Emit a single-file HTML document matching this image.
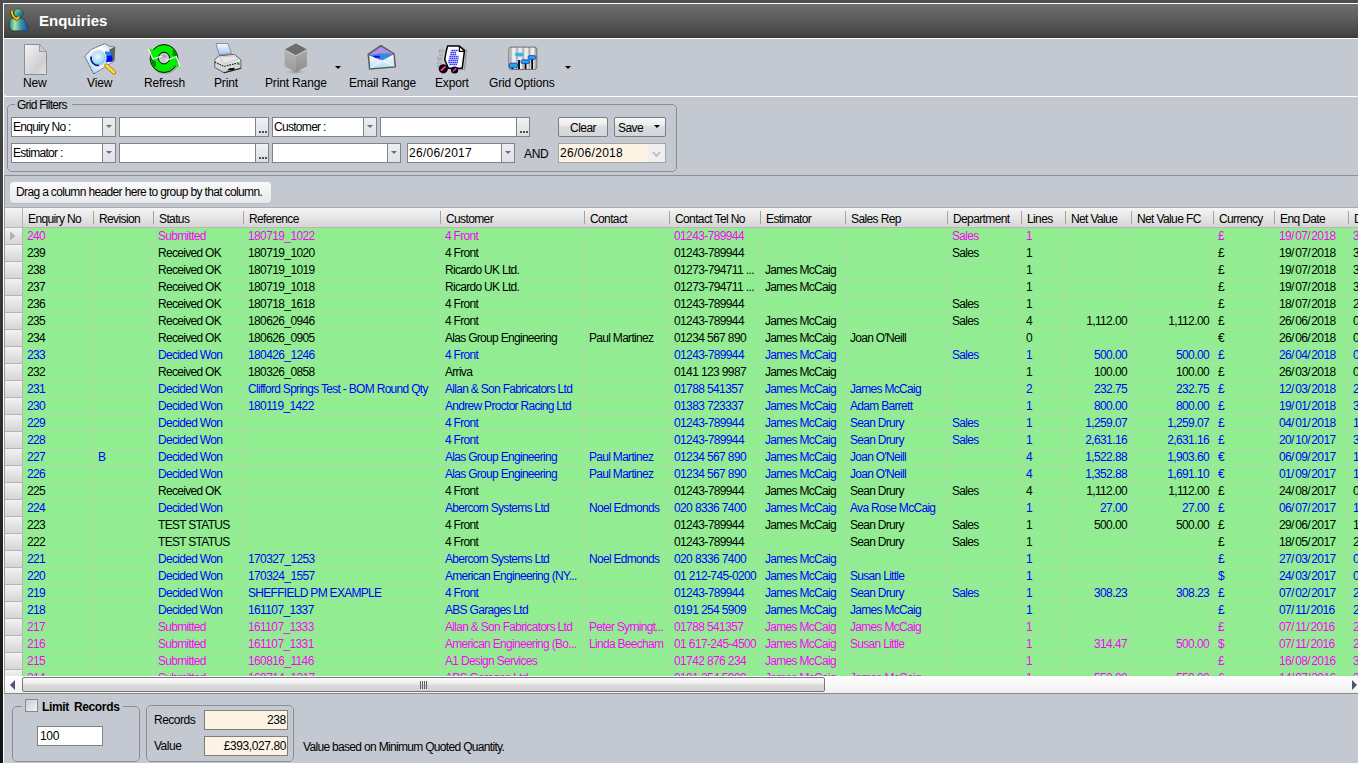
<!DOCTYPE html>
<html><head><meta charset="utf-8">
<style>
*{margin:0;padding:0;box-sizing:border-box}
html,body{width:1358px;height:763px;overflow:hidden}
body{position:relative;background:linear-gradient(#4e4e4e,#131313);font-family:"Liberation Sans",sans-serif;font-size:11px;color:#000}
.a{position:absolute}
#frame{left:3px;top:3px;width:1355px;height:760px;background:#fff}
#title{left:4px;top:4px;width:1354px;height:34px;background:linear-gradient(#6d6f6d,#5a5b5a 45%,#454545 90%,#383838)}
#title .t{left:35px;top:8px;font-size:15px;font-weight:bold;color:#fff;letter-spacing:0}
#toolbar{left:4px;top:39px;width:1354px;height:57px;background:#c4c8d0;border-bottom-left-radius:3px}
#panel{left:4px;top:97px;width:1354px;height:666px;background:#c4c8d0}
.tb{position:absolute;font-size:12px;color:#000;white-space:nowrap;letter-spacing:-0.15px}
.ddarrow{position:absolute;width:0;height:0;border-left:3px solid transparent;border-right:3px solid transparent;border-top:3px solid #000}
.gbox{position:absolute;border:1px solid #8a8d93;border-radius:4px}
.legend{position:absolute;background:#c4c8d0;padding:0 2px;white-space:nowrap;font-size:12px}
.inp{position:absolute;background:#fff;border:1px solid #828282;height:20px;white-space:nowrap;overflow:hidden}
.inp .tx{position:absolute;left:1px;top:2px;font-size:12px;letter-spacing:-0.7px}
.dd{position:absolute;top:0;right:0;width:13px;height:18px;border-left:1px solid #828282;background:linear-gradient(#eceef3,#dfe2e8)}
.dd:after{content:"";position:absolute;left:3px;top:7px;border-left:3px solid transparent;border-right:3px solid transparent;border-top:3px solid #707070}
.ell{position:absolute;background:linear-gradient(#f1f2f5,#dcdee3);border:1px solid #828282;height:20px;width:14px}
.ell:after{content:"";position:absolute;left:3px;top:13px;width:2px;height:2px;background:#505050;box-shadow:3px 0 0 #505050,6px 0 0 #505050}
.btn{position:absolute;border:1px solid #7b7d80;border-radius:2px;background:linear-gradient(#f7f7f8,#ececee 40%,#dcdee2 45%,#d3d5d9);height:20px;text-align:center;font-size:12px;line-height:21px;letter-spacing:-0.55px}
#grid{left:4px;top:175px;width:1354px;height:519px;background:#c4c8d0;border-top:1px solid #8e8e8e;border-left:1px solid #999;border-bottom:1px solid #888}
#dragbox{left:10px;top:182px;width:261px;height:21px;border-radius:4px;background:linear-gradient(#fafafa,#e8e9eb);box-shadow:0 1px 1px #b9bcc2;font-size:12px;line-height:21px;padding-left:6px;letter-spacing:-0.64px}
#hdr{left:5px;top:207px;width:1353px;height:21px;background:linear-gradient(#f4f4f4,#e6e6e6 50%,#d5d5d5);border-top:1px solid #a9abb0;border-bottom:1px solid #b9b5b9}
.hc{position:absolute;top:211px;height:17px;line-height:17px;padding-left:5px;white-space:nowrap;overflow:hidden;font-size:12px;letter-spacing:-0.62px}
.hsep{position:absolute;top:211px;width:1px;height:13px;background:#a2a2a2}
#data{left:23px;top:228px;width:1335px;height:448px;background:#90ee90;overflow:hidden}
.row{position:absolute;left:0;width:1358px;height:16px}
.c{position:absolute;top:0;height:16px;line-height:16px;padding-left:4px;padding-right:0;white-space:nowrap;overflow:hidden;font-size:12px;letter-spacing:-0.7px}
.c.r{text-align:right;padding-right:4px}
.d{letter-spacing:-0.62px}
.sl{letter-spacing:0.7px}
.hl{position:absolute;left:23px;width:1335px;height:1px;background:repeating-linear-gradient(90deg,#c6cfc6 0 1px,transparent 1px 2px)}
.vl{position:absolute;top:228px;width:1px;height:448px;background:repeating-linear-gradient(180deg,#c6cfc6 0 1px,transparent 1px 2px)}
#selcol{left:5px;top:228px;width:18px;height:448px;background:#d8d8d8;border-right:1px solid #b8b4b8}
.sel{position:absolute;left:5px;width:17px;height:17px;background:linear-gradient(#f2f2f2,#d6d6d6);border-bottom:1px solid #b4b4b4}
#hscroll{left:5px;top:676px;width:1353px;height:17px;background:linear-gradient(#ffffff,#f1f1f1)}
#thumb{left:22px;top:677px;width:803px;height:15px;border:1px solid #787878;border-radius:2px;background:linear-gradient(#fdfdfd,#ececec 45%,#d9d9d9 55%,#d2d2d2)}
.grip{position:absolute;top:681px;width:1px;height:8px;background:#5e5e5e}
.cb{position:absolute;border:1px solid #8a8a8a;background:linear-gradient(135deg,#c9cbd0,#f4f4f6)}
.num{position:absolute;background:#fdf4e6;border:1px solid #7e7e7e;height:20px;text-align:right;padding-right:1px;line-height:18px;font-size:12px;letter-spacing:-0.3px}
</style></head><body>
<div class="a" id="frame"></div>
<div class="a" id="title">
 <div class="a t">Enquiries</div>
</div>
<svg class="a" style="left:8px;top:8px" width="22" height="24" viewBox="0 0 22 24">
  <defs>
   <linearGradient id="hg" x1="0" y1="0" x2="1" y2="1"><stop offset="0" stop-color="#b8e8a8"/><stop offset="0.45" stop-color="#3aa08a"/><stop offset="1" stop-color="#1a3fb0"/></linearGradient>
   <linearGradient id="bg1" x1="0" y1="0" x2="1" y2="0"><stop offset="0" stop-color="#2a8070"/><stop offset="0.3" stop-color="#a8e8b0"/><stop offset="0.6" stop-color="#3a9a9a"/><stop offset="1" stop-color="#1a44c8"/></linearGradient>
  </defs>
  <path d="M1.2 15 C0.8 19 2.5 22.5 5.5 22.8 L18 22.8 C19.5 22.5 20.5 21 20.2 19 L16 11.5 C13 9.5 6 9 3 11 C1.8 12 1.3 13.5 1.2 15 Z" fill="url(#bg1)" stroke="#1a3a3a" stroke-width="0.6"/>
  <ellipse cx="10.6" cy="5.4" rx="4.6" ry="4.7" fill="url(#hg)" stroke="#0f3a30" stroke-width="0.6"/>
  <path d="M3.8 2.6 C3.6 6 5.5 9.8 8.8 11 L11.2 8.8" stroke="#3a2a00" stroke-width="3.2" fill="none" stroke-linejoin="round"/>
  <path d="M3.8 2.6 C3.6 6 5.5 9.8 8.8 11 L11.2 8.8" stroke="#ffc800" stroke-width="2" fill="none" stroke-linejoin="round"/>
</svg>
<div class="a" id="toolbar"></div>
<div class="a" id="panel"></div>

<!-- toolbar icons -->
<svg class="a" style="left:24px;top:44px" width="24" height="31" viewBox="0 0 24 31">
 <defs><linearGradient id="pg" x1="0" y1="0" x2="1" y2="1"><stop offset="0" stop-color="#f4f4f4"/><stop offset="0.5" stop-color="#d9d9dc"/><stop offset="0.7" stop-color="#cfcfd3"/><stop offset="1" stop-color="#e6e6e8"/></linearGradient></defs>
 <path d="M0.5 0.5 H15.5 L22.5 7.5 V30.5 H0.5 Z" fill="url(#pg)" stroke="#8e8e92"/>
 <path d="M15.5 0.5 V7.5 H22.5 Z" fill="#c9cbd6" stroke="#9a9aa0"/>
</svg>
<svg class="a" style="left:84px;top:43px" width="34" height="33" viewBox="0 0 34 33">
 <defs>
  <radialGradient id="lens" cx="0.45" cy="0.4" r="0.65"><stop offset="0" stop-color="#eaf7ff"/><stop offset="0.6" stop-color="#a8dcfa"/><stop offset="1" stop-color="#56b4f0"/></radialGradient>
  <linearGradient id="fold" x1="0" y1="1" x2="1" y2="0"><stop offset="0" stop-color="#6cc0f4"/><stop offset="0.35" stop-color="#e4f2fc"/><stop offset="0.7" stop-color="#ffffff"/><stop offset="1" stop-color="#9ccff6"/></linearGradient>
 </defs>
 <path d="M0.7 13.5 L6.8 6.7 L21 0.5 L24.8 3.1 L30.9 4.1 L30 18.2 L9.7 31 Z" fill="url(#fold)" stroke="#505050" stroke-width="0.9" stroke-dasharray="1.2 0.4"/>
 <path d="M25.2 6.4 L30.9 4.1 L30.4 17.8 L26.7 15.9 Z" fill="#5e6064"/>
 <path d="M21 8.3 L26.5 9 L28.5 18.7 L21 19.5 Z" fill="#1a80f8"/>
 <path d="M22 13 L28 12.5 L28.8 18.5 L21.5 19 Z" fill="#0008f0"/>
 <path d="M22.4 22.5 L30 29.5" stroke="#b07800" stroke-width="4.2" stroke-linecap="round"/>
 <path d="M22.4 22.5 L30 29.5" stroke="#ffe048" stroke-width="2.4" stroke-linecap="round"/>
 <circle cx="14.5" cy="15.1" r="7.6" fill="url(#lens)" stroke="#dcdce6" stroke-width="1.3"/>
 <path d="M7.2 13.5 A7.3 7.3 0 0 0 15 22.4" stroke="#0a1490" stroke-width="1.6" fill="none"/>
</svg>
<svg class="a" style="left:147px;top:43px" width="35" height="32" viewBox="0 0 35 32">
 <ellipse cx="18" cy="17.5" rx="14" ry="13.5" fill="#8f9196" opacity="0.7"/>
 <path d="M17 1.5 A13.8 14 0 1 1 3.2 16 A13.8 14 0 0 1 17 1.5 Z M17 9.3 A5.6 5.8 0 1 0 22.6 15.1 A5.6 5.8 0 0 0 17 9.3 Z" fill="#00ee00" fill-rule="evenodd" stroke="#000" stroke-width="0.9"/>
 <ellipse cx="17" cy="15.3" rx="4.8" ry="5" fill="#c8ccd4"/>
 <path d="M14 13 Q17 10.5 20 13.5 L18 15 Q16 13.5 14.5 15.5 Z" fill="#a0a4aa"/>
 <path d="M3.5 14 L9 19.5 L9 24 L5.5 22.5 Z" fill="#008a00"/>
 <path d="M26 6 L30 10 L29.5 15 L25.5 12 Z" fill="#008a00"/>
 <path d="M1 5 L10 8 L6 13 Z" fill="#00ee00"/>
 <path d="M34 25 L25 21.5 L29.5 17 Z" fill="#00ee00"/>
 <path d="M1.3 5.5 L6 16 L12 14 L15.5 13" stroke="#fff" stroke-width="1.2" fill="none"/>
 <path d="M19 17.5 L29.5 13.5 L33 24" stroke="#fff" stroke-width="1.2" fill="none"/>
</svg>
<svg class="a" style="left:214px;top:43px" width="28" height="31" viewBox="0 0 28 31">
 <defs><linearGradient id="paper" x1="0" y1="0" x2="0" y2="1"><stop offset="0" stop-color="#f6f9ff"/><stop offset="1" stop-color="#a6c4f6"/></linearGradient>
 <linearGradient id="pbody" x1="0" y1="0" x2="0" y2="1"><stop offset="0" stop-color="#f4f4f4"/><stop offset="1" stop-color="#c8c8c8"/></linearGradient></defs>
 <path d="M2 0.5 L13.8 0.5 L17.6 10.5 L5.3 12 Z" fill="url(#paper)" stroke="#7a7a80" stroke-width="0.8"/>
 <path d="M0.8 16.5 L5 12.8 L20.5 11.5 L26.8 16.8 L27 25.3 L10 29.8 L0.8 24.5 Z" fill="url(#pbody)" stroke="#555" stroke-width="0.9"/>
 <path d="M5 14 L20 12.8 L24 16 L10 20.5 Z" fill="#e8e8e8" stroke="#b8b8b8" stroke-width="0.6"/>
 <path d="M0.8 19.2 L10 23.4 L25.5 19.6" stroke="#111" stroke-width="1.1" stroke-dasharray="1.6 1" fill="none"/>
 <rect x="23.5" y="19.8" width="2.2" height="2.2" fill="#20c020"/>
 <path d="M13.5 27.5 L15 25.5 L21 24.8 L19.5 27 Z" fill="#000"/>
 <path d="M10 29.8 L27 25.3" stroke="#222" stroke-width="1"/>
</svg>
<svg class="a" style="left:283px;top:42px" width="27" height="33" viewBox="0 0 27 33">
 <defs><linearGradient id="cubeL" x1="0" y1="0" x2="0" y2="1"><stop offset="0" stop-color="#b4b4b4"/><stop offset="1" stop-color="#9a9a9a"/></linearGradient>
 <linearGradient id="cubeR" x1="0" y1="0" x2="0" y2="1"><stop offset="0" stop-color="#aaaaaa"/><stop offset="1" stop-color="#8e8e8e"/></linearGradient>
 <radialGradient id="shd" cx="0.5" cy="0.5" r="0.5"><stop offset="0" stop-color="#80838a"/><stop offset="1" stop-color="#c4c8d0" stop-opacity="0"/></radialGradient></defs>
 <ellipse cx="12.8" cy="29.8" rx="12" ry="3.2" fill="url(#shd)"/>
 <path d="M1.6 7.8 L12.8 13.8 L12.8 30 L1.8 24.2 Z" fill="url(#cubeL)"/>
 <path d="M12.8 13.8 L24 7.8 L23.8 24.2 L12.8 30 Z" fill="url(#cubeR)"/>
 <path d="M1.3 7.3 L12.8 1 L24.4 7.3 L12.8 13.8 Z" fill="#6e6e6e"/>
 <path d="M1.3 7.3 L12.8 1 L24.4 7.3" stroke="#f0f0f0" stroke-width="0.9" stroke-dasharray="1 1" fill="none"/>
 <path d="M1.6 7.8 L12.8 13.8 L24 7.8" stroke="#dcdcdc" stroke-width="0.8" fill="none"/>
</svg>
<div class="ddarrow" style="left:335px;top:66px"></div>
<svg class="a" style="left:367px;top:45px" width="30" height="26" viewBox="0 0 30 26">
 <defs><linearGradient id="env" x1="0" y1="0" x2="0" y2="1"><stop offset="0" stop-color="#ffffff"/><stop offset="1" stop-color="#b4ddfa"/></linearGradient></defs>
 <path d="M1.1 9.2 L13.9 0.4 L27.1 8.7 L28.5 21.9 L2.5 24.2 Z" fill="#6a6a6a" stroke="#5a5a5a" stroke-width="1.2" stroke-linejoin="round"/>
 <path d="M2.5 9.5 L13.9 1.8 L26 8.7 L15.3 15 Z" fill="#b48cf0"/>
 <rect x="10.6" y="8.2" width="13" height="1.9" fill="#6e9090"/>
 <path d="M2.1 9.6 L25.5 8.7 L15.3 14.8 Z" fill="#1a92f0"/>
 <rect x="6.5" y="10.8" width="6.5" height="2.8" fill="#0a10d0"/>
 <rect x="10" y="12.3" width="3" height="2" fill="#c020c8"/>
 <path d="M2.3 10.6 L15.3 15.5 L26.4 9.6 L27.4 21.2 L3.3 23.3 Z" fill="url(#env)"/>
 <path d="M3.3 23 L15.5 15.5 L27.3 21" stroke="#ffffff" stroke-width="0.8" fill="none"/>
</svg>
<svg class="a" style="left:437px;top:45px" width="31" height="30" viewBox="0 0 31 30">
 <path d="M2 5 H7 M1 7 H7 M2 10 H6 M0 13 H6 M1 15 H5 M0 18 H5 M0 21 H4" stroke="#8e9096" stroke-width="1" stroke-dasharray="2 0.7"/>
 <path d="M12 3 L26 3 L29.5 6 L27.5 24.5 L13 24.5" fill="none" stroke="#9a9ca2" stroke-width="1.4"/>
 <path d="M10.6 1.1 L22.4 1.1 L27.5 5.6 L25.2 23.3 L11.5 23.3 L7.7 14.8 L9.2 6.3 Z" fill="#fff" stroke="#000" stroke-width="1.5" stroke-linejoin="round"/>
 <path d="M22.4 1.1 L22.4 6.3 L27.5 6.3" fill="none" stroke="#000" stroke-width="1.3"/>
 <g stroke="#0000ff" stroke-width="1.5" stroke-dasharray="1.3 0.7">
  <path d="M14.5 5.4 H21"/><path d="M13.5 7.5 H19.5"/><path d="M13.5 9.4 H19"/><path d="M12.5 11.5 H21.5"/><path d="M12.5 13.4 H21.5"/><path d="M11.5 15.5 H21"/><path d="M11.5 17.4 H21"/><path d="M12.5 19.5 H20.5"/>
 </g>
 <circle cx="6.3" cy="23.8" r="4.6" fill="#000"/><path d="M3.8 25.6 L8.6 21.4" stroke="#ff20d0" stroke-width="2"/><path d="M4.5 26 L7 24" stroke="#ff1010" stroke-width="1"/>
 <circle cx="17.6" cy="25" r="3.6" fill="#000"/><path d="M15.9 26.4 L19.3 23.4" stroke="#ff20d0" stroke-width="1.7"/>
</svg>
<svg class="a" style="left:508px;top:46px" width="30" height="25" viewBox="0 0 30 25">
 <defs><linearGradient id="gog" x1="0" y1="0" x2="1" y2="0" spreadMethod="repeat" gradientTransform="scale(0.22,1)"><stop offset="0" stop-color="#f0f0f0"/><stop offset="0.35" stop-color="#a8a8a8"/><stop offset="0.6" stop-color="#e8e8e8"/><stop offset="1" stop-color="#f0f0f0"/></linearGradient></defs>
 <rect x="0.8" y="1.1" width="28" height="22.4" rx="2.5" fill="url(#gog)" stroke="#6e6e6e" stroke-width="1"/>
 <path d="M4.4 18 V23 M11 14 V23 M17.6 14 V23 M24.2 10 V23" stroke="#000" stroke-width="1.8"/>
 <rect x="1.2" y="17.1" width="8.4" height="4.7" rx="2" fill="#1aa8e8" stroke="#0a20c0" stroke-width="0.7"/>
 <rect x="6.8" y="6.7" width="8.5" height="3.8" rx="1.9" fill="#29b8ee"/>
 <rect x="12.9" y="13.8" width="9" height="3.8" rx="1.9" fill="#1aa8e8" stroke="#0a20c0" stroke-width="0.7"/>
 <rect x="20" y="9.6" width="8" height="3.7" rx="1.8" fill="#1aa8e8" stroke="#0a20c0" stroke-width="0.7"/>
</svg>
<div class="ddarrow" style="left:565px;top:66px"></div>

<div class="tb" style="left:23px;top:76px">New</div>
<div class="tb" style="left:87px;top:76px">View</div>
<div class="tb" style="left:144px;top:76px">Refresh</div>
<div class="tb" style="left:214px;top:76px">Print</div>
<div class="tb" style="left:265px;top:76px">Print Range</div>
<div class="tb" style="left:349px;top:76px">Email Range</div>
<div class="tb" style="left:435px;top:76px">Export</div>
<div class="tb" style="left:489px;top:76px">Grid Options</div>

<!-- Grid filters -->
<svg class="a" style="left:7px;top:104px" width="670" height="68"><path d="M3.5 0.5 H666.5 L669.5 3.5 V64.5 L666.5 67.5 H3.5 L0.5 64.5 V3.5 Z" fill="none" stroke="#8a8d93" stroke-width="1"/></svg>
<div class="legend" style="left:15px;top:98px;width:57px;letter-spacing:-0.75px">Grid Filters</div>

<div class="inp" style="left:11px;top:117px;width:105px"><span class="tx">Enquiry No :</span><div class="dd"></div></div>
<div class="inp" style="left:119px;top:117px;width:137px"></div>
<div class="ell" style="left:255px;top:117px"></div>
<div class="inp" style="left:272px;top:117px;width:105px"><span class="tx">Customer :</span><div class="dd"></div></div>
<div class="inp" style="left:380px;top:117px;width:137px"></div>
<div class="ell" style="left:516px;top:117px"></div>
<div class="btn" style="left:558px;top:117px;width:50px">Clear</div>
<div class="btn" style="left:614px;top:117px;width:52px;text-align:left;padding-left:3px">Save<div class="ddarrow" style="left:39px;top:7px"></div></div>

<div class="inp" style="left:11px;top:143px;width:105px"><span class="tx">Estimator :</span><div class="dd"></div></div>
<div class="inp" style="left:119px;top:143px;width:137px"></div>
<div class="ell" style="left:255px;top:143px"></div>
<div class="inp" style="left:272px;top:143px;width:129px"><div class="dd"></div></div>
<div class="inp" style="left:407px;top:143px;width:108px"><span class="tx" style="letter-spacing:0.3px">26/06/2017</span><div class="dd"></div></div>
<div class="a" style="left:524px;top:147px;font-size:12px;letter-spacing:-0.3px">AND</div>
<div class="inp" style="left:558px;top:143px;width:108px;background:#fdf4e6;border-color:#a4a4a4"><span class="tx" style="letter-spacing:0.3px">26/06/2018</span><div class="a" style="right:0;top:0;width:17px;height:18px;background:#efefef"><svg class="a" style="left:4px;top:7px" width="9" height="7"><path d="M0.8 0.8 L4.5 5 L8.2 0.8" stroke="#bdbdbd" stroke-width="1.8" fill="none"/></svg></div></div>

<!-- grid -->
<div class="a" id="grid"></div>
<div class="a" id="dragbox">Drag a column header here to group by that column.</div>
<div class="a" id="hdr"></div>
<div class="hc" style="left:23px;width:70px">Enquiry No</div><div class="hsep" style="left:93px"></div><div class="hc" style="left:94px;width:59px">Revision</div><div class="hsep" style="left:153px"></div><div class="hc" style="left:154px;width:89px">Status</div><div class="hsep" style="left:243px"></div><div class="hc" style="left:244px;width:196px">Reference</div><div class="hsep" style="left:440px"></div><div class="hc" style="left:441px;width:143px">Customer</div><div class="hsep" style="left:584px"></div><div class="hc" style="left:585px;width:84px">Contact</div><div class="hsep" style="left:669px"></div><div class="hc" style="left:670px;width:90px">Contact Tel No</div><div class="hsep" style="left:760px"></div><div class="hc" style="left:761px;width:84px">Estimator</div><div class="hsep" style="left:845px"></div><div class="hc" style="left:846px;width:101px">Sales Rep</div><div class="hsep" style="left:947px"></div><div class="hc" style="left:948px;width:73px">Department</div><div class="hsep" style="left:1021px"></div><div class="hc" style="left:1022px;width:43px">Lines</div><div class="hsep" style="left:1065px"></div><div class="hc" style="left:1066px;width:65px">Net Value</div><div class="hsep" style="left:1131px"></div><div class="hc" style="left:1132px;width:81px">Net Value FC</div><div class="hsep" style="left:1213px"></div><div class="hc" style="left:1214px;width:60px">Currency</div><div class="hsep" style="left:1274px"></div><div class="hc" style="left:1275px;width:73px">Enq Date</div><div class="hsep" style="left:1348px"></div><div class="hc" style="left:1349px;width:71px">Date</div>
<div class="a" id="selcol"></div>
<div class="sel" style="top:228px"></div><div class="sel" style="top:245px"></div><div class="sel" style="top:262px"></div><div class="sel" style="top:279px"></div><div class="sel" style="top:296px"></div><div class="sel" style="top:313px"></div><div class="sel" style="top:330px"></div><div class="sel" style="top:347px"></div><div class="sel" style="top:364px"></div><div class="sel" style="top:381px"></div><div class="sel" style="top:398px"></div><div class="sel" style="top:415px"></div><div class="sel" style="top:432px"></div><div class="sel" style="top:449px"></div><div class="sel" style="top:466px"></div><div class="sel" style="top:483px"></div><div class="sel" style="top:500px"></div><div class="sel" style="top:517px"></div><div class="sel" style="top:534px"></div><div class="sel" style="top:551px"></div><div class="sel" style="top:568px"></div><div class="sel" style="top:585px"></div><div class="sel" style="top:602px"></div><div class="sel" style="top:619px"></div><div class="sel" style="top:636px"></div><div class="sel" style="top:653px"></div><div class="sel" style="top:670px"></div>
<div class="a" style="left:22px;top:208px;width:1px;height:19px;background:#b4b4b4"></div>
<svg class="a" style="left:10px;top:231px" width="7" height="11"><path d="M0 0.5 L5.5 5 L0 9.5 Z" fill="#b0b0b0"/></svg>
<div class="a" id="data"></div>
<div class="hl" style="top:244px"></div><div class="hl" style="top:261px"></div><div class="hl" style="top:278px"></div><div class="hl" style="top:295px"></div><div class="hl" style="top:312px"></div><div class="hl" style="top:329px"></div><div class="hl" style="top:346px"></div><div class="hl" style="top:363px"></div><div class="hl" style="top:380px"></div><div class="hl" style="top:397px"></div><div class="hl" style="top:414px"></div><div class="hl" style="top:431px"></div><div class="hl" style="top:448px"></div><div class="hl" style="top:465px"></div><div class="hl" style="top:482px"></div><div class="hl" style="top:499px"></div><div class="hl" style="top:516px"></div><div class="hl" style="top:533px"></div><div class="hl" style="top:550px"></div><div class="hl" style="top:567px"></div><div class="hl" style="top:584px"></div><div class="hl" style="top:601px"></div><div class="hl" style="top:618px"></div><div class="hl" style="top:635px"></div><div class="hl" style="top:652px"></div><div class="hl" style="top:669px"></div><div class="vl" style="left:93px"></div><div class="vl" style="left:153px"></div><div class="vl" style="left:243px"></div><div class="vl" style="left:440px"></div><div class="vl" style="left:584px"></div><div class="vl" style="left:669px"></div><div class="vl" style="left:760px"></div><div class="vl" style="left:845px"></div><div class="vl" style="left:947px"></div><div class="vl" style="left:1021px"></div><div class="vl" style="left:1065px"></div><div class="vl" style="left:1131px"></div><div class="vl" style="left:1213px"></div><div class="vl" style="left:1274px"></div><div class="vl" style="left:1348px"></div>
<div class="a" style="left:0;top:0;width:1358px;height:763px;overflow:hidden;pointer-events:none">
 <div class="a" style="left:0;top:0;width:1358px;height:676px;overflow:hidden"><div class="row" style="top:228px;color:#ff00ff"><div class="c d" style="left:23px;width:70px">240</div><div class="c" style="left:154px;width:89px">Submitted</div><div class="c d" style="left:244px;width:196px">180719_1022</div><div class="c" style="left:441px;width:143px">4 Front</div><div class="c d" style="left:670px;width:90px">01243-789944</div><div class="c" style="left:948px;width:73px">Sales</div><div class="c d" style="left:1022px;width:43px">1</div><div class="c" style="left:1214px;width:60px">£</div><div class="c d" style="left:1275px;width:73px">19<span class="sl">/</span>07<span class="sl">/</span>2018</div><div class="c d" style="left:1349px;width:71px">3</div></div><div class="row" style="top:245px;color:#000000"><div class="c d" style="left:23px;width:70px">239</div><div class="c" style="left:154px;width:89px">Received OK</div><div class="c d" style="left:244px;width:196px">180719_1020</div><div class="c" style="left:441px;width:143px">4 Front</div><div class="c d" style="left:670px;width:90px">01243-789944</div><div class="c" style="left:948px;width:73px">Sales</div><div class="c d" style="left:1022px;width:43px">1</div><div class="c" style="left:1214px;width:60px">£</div><div class="c d" style="left:1275px;width:73px">19<span class="sl">/</span>07<span class="sl">/</span>2018</div><div class="c d" style="left:1349px;width:71px">3</div></div><div class="row" style="top:262px;color:#000000"><div class="c d" style="left:23px;width:70px">238</div><div class="c" style="left:154px;width:89px">Received OK</div><div class="c d" style="left:244px;width:196px">180719_1019</div><div class="c" style="left:441px;width:143px">Ricardo UK Ltd.</div><div class="c d" style="left:670px;width:90px">01273-794711 ...</div><div class="c" style="left:761px;width:84px">James McCaig</div><div class="c d" style="left:1022px;width:43px">1</div><div class="c" style="left:1214px;width:60px">£</div><div class="c d" style="left:1275px;width:73px">19<span class="sl">/</span>07<span class="sl">/</span>2018</div><div class="c d" style="left:1349px;width:71px">3</div></div><div class="row" style="top:279px;color:#000000"><div class="c d" style="left:23px;width:70px">237</div><div class="c" style="left:154px;width:89px">Received OK</div><div class="c d" style="left:244px;width:196px">180719_1018</div><div class="c" style="left:441px;width:143px">Ricardo UK Ltd.</div><div class="c d" style="left:670px;width:90px">01273-794711 ...</div><div class="c" style="left:761px;width:84px">James McCaig</div><div class="c d" style="left:1022px;width:43px">1</div><div class="c" style="left:1214px;width:60px">£</div><div class="c d" style="left:1275px;width:73px">19<span class="sl">/</span>07<span class="sl">/</span>2018</div><div class="c d" style="left:1349px;width:71px">3</div></div><div class="row" style="top:296px;color:#000000"><div class="c d" style="left:23px;width:70px">236</div><div class="c" style="left:154px;width:89px">Received OK</div><div class="c d" style="left:244px;width:196px">180718_1618</div><div class="c" style="left:441px;width:143px">4 Front</div><div class="c d" style="left:670px;width:90px">01243-789944</div><div class="c" style="left:948px;width:73px">Sales</div><div class="c d" style="left:1022px;width:43px">1</div><div class="c" style="left:1214px;width:60px">£</div><div class="c d" style="left:1275px;width:73px">18<span class="sl">/</span>07<span class="sl">/</span>2018</div><div class="c d" style="left:1349px;width:71px">2</div></div><div class="row" style="top:313px;color:#000000"><div class="c d" style="left:23px;width:70px">235</div><div class="c" style="left:154px;width:89px">Received OK</div><div class="c d" style="left:244px;width:196px">180626_0946</div><div class="c" style="left:441px;width:143px">4 Front</div><div class="c d" style="left:670px;width:90px">01243-789944</div><div class="c" style="left:761px;width:84px">James McCaig</div><div class="c" style="left:948px;width:73px">Sales</div><div class="c d" style="left:1022px;width:43px">4</div><div class="c r d" style="left:1066px;width:65px">1,112.00</div><div class="c r d" style="left:1132px;width:81px">1,112.00</div><div class="c" style="left:1214px;width:60px">£</div><div class="c d" style="left:1275px;width:73px">26<span class="sl">/</span>06<span class="sl">/</span>2018</div><div class="c d" style="left:1349px;width:71px">0</div></div><div class="row" style="top:330px;color:#000000"><div class="c d" style="left:23px;width:70px">234</div><div class="c" style="left:154px;width:89px">Received OK</div><div class="c d" style="left:244px;width:196px">180626_0905</div><div class="c" style="left:441px;width:143px">Alas Group Engineering</div><div class="c" style="left:585px;width:84px">Paul Martinez</div><div class="c d" style="left:670px;width:90px">01234 567 890</div><div class="c" style="left:761px;width:84px">James McCaig</div><div class="c" style="left:846px;width:101px">Joan O'Neill</div><div class="c d" style="left:1022px;width:43px">0</div><div class="c" style="left:1214px;width:60px">€</div><div class="c d" style="left:1275px;width:73px">26<span class="sl">/</span>06<span class="sl">/</span>2018</div><div class="c d" style="left:1349px;width:71px">0</div></div><div class="row" style="top:347px;color:#0000ff"><div class="c d" style="left:23px;width:70px">233</div><div class="c" style="left:154px;width:89px">Decided Won</div><div class="c d" style="left:244px;width:196px">180426_1246</div><div class="c" style="left:441px;width:143px">4 Front</div><div class="c d" style="left:670px;width:90px">01243-789944</div><div class="c" style="left:761px;width:84px">James McCaig</div><div class="c" style="left:948px;width:73px">Sales</div><div class="c d" style="left:1022px;width:43px">1</div><div class="c r d" style="left:1066px;width:65px">500.00</div><div class="c r d" style="left:1132px;width:81px">500.00</div><div class="c" style="left:1214px;width:60px">£</div><div class="c d" style="left:1275px;width:73px">26<span class="sl">/</span>04<span class="sl">/</span>2018</div><div class="c d" style="left:1349px;width:71px">0</div></div><div class="row" style="top:364px;color:#000000"><div class="c d" style="left:23px;width:70px">232</div><div class="c" style="left:154px;width:89px">Received OK</div><div class="c d" style="left:244px;width:196px">180326_0858</div><div class="c" style="left:441px;width:143px">Arriva</div><div class="c d" style="left:670px;width:90px">0141 123 9987</div><div class="c" style="left:761px;width:84px">James McCaig</div><div class="c d" style="left:1022px;width:43px">1</div><div class="c r d" style="left:1066px;width:65px">100.00</div><div class="c r d" style="left:1132px;width:81px">100.00</div><div class="c" style="left:1214px;width:60px">£</div><div class="c d" style="left:1275px;width:73px">26<span class="sl">/</span>03<span class="sl">/</span>2018</div><div class="c d" style="left:1349px;width:71px">0</div></div><div class="row" style="top:381px;color:#0000ff"><div class="c d" style="left:23px;width:70px">231</div><div class="c" style="left:154px;width:89px">Decided Won</div><div class="c" style="left:244px;width:196px">Clifford Springs Test - BOM Round Qty</div><div class="c" style="left:441px;width:143px">Allan &amp; Son Fabricators Ltd</div><div class="c d" style="left:670px;width:90px">01788 541357</div><div class="c" style="left:761px;width:84px">James McCaig</div><div class="c" style="left:846px;width:101px">James McCaig</div><div class="c d" style="left:1022px;width:43px">2</div><div class="c r d" style="left:1066px;width:65px">232.75</div><div class="c r d" style="left:1132px;width:81px">232.75</div><div class="c" style="left:1214px;width:60px">£</div><div class="c d" style="left:1275px;width:73px">12<span class="sl">/</span>03<span class="sl">/</span>2018</div><div class="c d" style="left:1349px;width:71px">2</div></div><div class="row" style="top:398px;color:#0000ff"><div class="c d" style="left:23px;width:70px">230</div><div class="c" style="left:154px;width:89px">Decided Won</div><div class="c d" style="left:244px;width:196px">180119_1422</div><div class="c" style="left:441px;width:143px">Andrew Proctor Racing Ltd</div><div class="c d" style="left:670px;width:90px">01383 723337</div><div class="c" style="left:761px;width:84px">James McCaig</div><div class="c" style="left:846px;width:101px">Adam Barrett</div><div class="c d" style="left:1022px;width:43px">1</div><div class="c r d" style="left:1066px;width:65px">800.00</div><div class="c r d" style="left:1132px;width:81px">800.00</div><div class="c" style="left:1214px;width:60px">£</div><div class="c d" style="left:1275px;width:73px">19<span class="sl">/</span>01<span class="sl">/</span>2018</div><div class="c d" style="left:1349px;width:71px">3</div></div><div class="row" style="top:415px;color:#0000ff"><div class="c d" style="left:23px;width:70px">229</div><div class="c" style="left:154px;width:89px">Decided Won</div><div class="c" style="left:441px;width:143px">4 Front</div><div class="c d" style="left:670px;width:90px">01243-789944</div><div class="c" style="left:761px;width:84px">James McCaig</div><div class="c" style="left:846px;width:101px">Sean Drury</div><div class="c" style="left:948px;width:73px">Sales</div><div class="c d" style="left:1022px;width:43px">1</div><div class="c r d" style="left:1066px;width:65px">1,259.07</div><div class="c r d" style="left:1132px;width:81px">1,259.07</div><div class="c" style="left:1214px;width:60px">£</div><div class="c d" style="left:1275px;width:73px">04<span class="sl">/</span>01<span class="sl">/</span>2018</div><div class="c d" style="left:1349px;width:71px">1</div></div><div class="row" style="top:432px;color:#0000ff"><div class="c d" style="left:23px;width:70px">228</div><div class="c" style="left:154px;width:89px">Decided Won</div><div class="c" style="left:441px;width:143px">4 Front</div><div class="c d" style="left:670px;width:90px">01243-789944</div><div class="c" style="left:761px;width:84px">James McCaig</div><div class="c" style="left:846px;width:101px">Sean Drury</div><div class="c" style="left:948px;width:73px">Sales</div><div class="c d" style="left:1022px;width:43px">1</div><div class="c r d" style="left:1066px;width:65px">2,631.16</div><div class="c r d" style="left:1132px;width:81px">2,631.16</div><div class="c" style="left:1214px;width:60px">£</div><div class="c d" style="left:1275px;width:73px">20<span class="sl">/</span>10<span class="sl">/</span>2017</div><div class="c d" style="left:1349px;width:71px">3</div></div><div class="row" style="top:449px;color:#0000ff"><div class="c d" style="left:23px;width:70px">227</div><div class="c" style="left:94px;width:59px">B</div><div class="c" style="left:154px;width:89px">Decided Won</div><div class="c" style="left:441px;width:143px">Alas Group Engineering</div><div class="c" style="left:585px;width:84px">Paul Martinez</div><div class="c d" style="left:670px;width:90px">01234 567 890</div><div class="c" style="left:761px;width:84px">James McCaig</div><div class="c" style="left:846px;width:101px">Joan O'Neill</div><div class="c d" style="left:1022px;width:43px">4</div><div class="c r d" style="left:1066px;width:65px">1,522.88</div><div class="c r d" style="left:1132px;width:81px">1,903.60</div><div class="c" style="left:1214px;width:60px">€</div><div class="c d" style="left:1275px;width:73px">06<span class="sl">/</span>09<span class="sl">/</span>2017</div><div class="c d" style="left:1349px;width:71px">1</div></div><div class="row" style="top:466px;color:#0000ff"><div class="c d" style="left:23px;width:70px">226</div><div class="c" style="left:154px;width:89px">Decided Won</div><div class="c" style="left:441px;width:143px">Alas Group Engineering</div><div class="c" style="left:585px;width:84px">Paul Martinez</div><div class="c d" style="left:670px;width:90px">01234 567 890</div><div class="c" style="left:761px;width:84px">James McCaig</div><div class="c" style="left:846px;width:101px">Joan O'Neill</div><div class="c d" style="left:1022px;width:43px">4</div><div class="c r d" style="left:1066px;width:65px">1,352.88</div><div class="c r d" style="left:1132px;width:81px">1,691.10</div><div class="c" style="left:1214px;width:60px">€</div><div class="c d" style="left:1275px;width:73px">01<span class="sl">/</span>09<span class="sl">/</span>2017</div><div class="c d" style="left:1349px;width:71px">1</div></div><div class="row" style="top:483px;color:#000000"><div class="c d" style="left:23px;width:70px">225</div><div class="c" style="left:154px;width:89px">Received OK</div><div class="c" style="left:441px;width:143px">4 Front</div><div class="c d" style="left:670px;width:90px">01243-789944</div><div class="c" style="left:761px;width:84px">James McCaig</div><div class="c" style="left:846px;width:101px">Sean Drury</div><div class="c" style="left:948px;width:73px">Sales</div><div class="c d" style="left:1022px;width:43px">4</div><div class="c r d" style="left:1066px;width:65px">1,112.00</div><div class="c r d" style="left:1132px;width:81px">1,112.00</div><div class="c" style="left:1214px;width:60px">£</div><div class="c d" style="left:1275px;width:73px">24<span class="sl">/</span>08<span class="sl">/</span>2017</div><div class="c d" style="left:1349px;width:71px">0</div></div><div class="row" style="top:500px;color:#0000ff"><div class="c d" style="left:23px;width:70px">224</div><div class="c" style="left:154px;width:89px">Decided Won</div><div class="c" style="left:441px;width:143px">Abercorn Systems Ltd</div><div class="c" style="left:585px;width:84px">Noel Edmonds</div><div class="c d" style="left:670px;width:90px">020 8336 7400</div><div class="c" style="left:761px;width:84px">James McCaig</div><div class="c" style="left:846px;width:101px">Ava Rose McCaig</div><div class="c d" style="left:1022px;width:43px">1</div><div class="c r d" style="left:1066px;width:65px">27.00</div><div class="c r d" style="left:1132px;width:81px">27.00</div><div class="c" style="left:1214px;width:60px">£</div><div class="c d" style="left:1275px;width:73px">06<span class="sl">/</span>07<span class="sl">/</span>2017</div><div class="c d" style="left:1349px;width:71px">1</div></div><div class="row" style="top:517px;color:#000000"><div class="c d" style="left:23px;width:70px">223</div><div class="c" style="left:154px;width:89px">TEST STATUS</div><div class="c" style="left:441px;width:143px">4 Front</div><div class="c d" style="left:670px;width:90px">01243-789944</div><div class="c" style="left:761px;width:84px">James McCaig</div><div class="c" style="left:846px;width:101px">Sean Drury</div><div class="c" style="left:948px;width:73px">Sales</div><div class="c d" style="left:1022px;width:43px">1</div><div class="c r d" style="left:1066px;width:65px">500.00</div><div class="c r d" style="left:1132px;width:81px">500.00</div><div class="c" style="left:1214px;width:60px">£</div><div class="c d" style="left:1275px;width:73px">29<span class="sl">/</span>06<span class="sl">/</span>2017</div><div class="c d" style="left:1349px;width:71px">1</div></div><div class="row" style="top:534px;color:#000000"><div class="c d" style="left:23px;width:70px">222</div><div class="c" style="left:154px;width:89px">TEST STATUS</div><div class="c" style="left:441px;width:143px">4 Front</div><div class="c d" style="left:670px;width:90px">01243-789944</div><div class="c" style="left:846px;width:101px">Sean Drury</div><div class="c" style="left:948px;width:73px">Sales</div><div class="c d" style="left:1022px;width:43px">1</div><div class="c" style="left:1214px;width:60px">£</div><div class="c d" style="left:1275px;width:73px">18<span class="sl">/</span>05<span class="sl">/</span>2017</div><div class="c d" style="left:1349px;width:71px">2</div></div><div class="row" style="top:551px;color:#0000ff"><div class="c d" style="left:23px;width:70px">221</div><div class="c" style="left:154px;width:89px">Decided Won</div><div class="c d" style="left:244px;width:196px">170327_1253</div><div class="c" style="left:441px;width:143px">Abercorn Systems Ltd</div><div class="c" style="left:585px;width:84px">Noel Edmonds</div><div class="c d" style="left:670px;width:90px">020 8336 7400</div><div class="c" style="left:761px;width:84px">James McCaig</div><div class="c d" style="left:1022px;width:43px">1</div><div class="c" style="left:1214px;width:60px">£</div><div class="c d" style="left:1275px;width:73px">27<span class="sl">/</span>03<span class="sl">/</span>2017</div><div class="c d" style="left:1349px;width:71px">0</div></div><div class="row" style="top:568px;color:#0000ff"><div class="c d" style="left:23px;width:70px">220</div><div class="c" style="left:154px;width:89px">Decided Won</div><div class="c d" style="left:244px;width:196px">170324_1557</div><div class="c" style="left:441px;width:143px">American Engineering (NY...</div><div class="c d" style="left:670px;width:90px">01 212-745-0200</div><div class="c" style="left:761px;width:84px">James McCaig</div><div class="c" style="left:846px;width:101px">Susan Little</div><div class="c d" style="left:1022px;width:43px">1</div><div class="c" style="left:1214px;width:60px">$</div><div class="c d" style="left:1275px;width:73px">24<span class="sl">/</span>03<span class="sl">/</span>2017</div><div class="c d" style="left:1349px;width:71px">0</div></div><div class="row" style="top:585px;color:#0000ff"><div class="c d" style="left:23px;width:70px">219</div><div class="c" style="left:154px;width:89px">Decided Won</div><div class="c" style="left:244px;width:196px">SHEFFIELD PM EXAMPLE</div><div class="c" style="left:441px;width:143px">4 Front</div><div class="c d" style="left:670px;width:90px">01243-789944</div><div class="c" style="left:761px;width:84px">James McCaig</div><div class="c" style="left:846px;width:101px">Sean Drury</div><div class="c" style="left:948px;width:73px">Sales</div><div class="c d" style="left:1022px;width:43px">1</div><div class="c r d" style="left:1066px;width:65px">308.23</div><div class="c r d" style="left:1132px;width:81px">308.23</div><div class="c" style="left:1214px;width:60px">£</div><div class="c d" style="left:1275px;width:73px">07<span class="sl">/</span>02<span class="sl">/</span>2017</div><div class="c d" style="left:1349px;width:71px">2</div></div><div class="row" style="top:602px;color:#0000ff"><div class="c d" style="left:23px;width:70px">218</div><div class="c" style="left:154px;width:89px">Decided Won</div><div class="c d" style="left:244px;width:196px">161107_1337</div><div class="c" style="left:441px;width:143px">ABS Garages Ltd</div><div class="c d" style="left:670px;width:90px">0191 254 5909</div><div class="c" style="left:761px;width:84px">James McCaig</div><div class="c" style="left:846px;width:101px">James McCaig</div><div class="c d" style="left:1022px;width:43px">1</div><div class="c" style="left:1214px;width:60px">£</div><div class="c d" style="left:1275px;width:73px">07<span class="sl">/</span>11<span class="sl">/</span>2016</div><div class="c d" style="left:1349px;width:71px">2</div></div><div class="row" style="top:619px;color:#ff00ff"><div class="c d" style="left:23px;width:70px">217</div><div class="c" style="left:154px;width:89px">Submitted</div><div class="c d" style="left:244px;width:196px">161107_1333</div><div class="c" style="left:441px;width:143px">Allan &amp; Son Fabricators Ltd</div><div class="c" style="left:585px;width:84px">Peter Symingt...</div><div class="c d" style="left:670px;width:90px">01788 541357</div><div class="c" style="left:761px;width:84px">James McCaig</div><div class="c" style="left:846px;width:101px">James McCaig</div><div class="c d" style="left:1022px;width:43px">1</div><div class="c" style="left:1214px;width:60px">£</div><div class="c d" style="left:1275px;width:73px">07<span class="sl">/</span>11<span class="sl">/</span>2016</div><div class="c d" style="left:1349px;width:71px">2</div></div><div class="row" style="top:636px;color:#ff00ff"><div class="c d" style="left:23px;width:70px">216</div><div class="c" style="left:154px;width:89px">Submitted</div><div class="c d" style="left:244px;width:196px">161107_1331</div><div class="c" style="left:441px;width:143px">American Engineering (Bo...</div><div class="c" style="left:585px;width:84px">Linda Beecham</div><div class="c d" style="left:670px;width:90px">01 617-245-4500</div><div class="c" style="left:761px;width:84px">James McCaig</div><div class="c" style="left:846px;width:101px">Susan Little</div><div class="c d" style="left:1022px;width:43px">1</div><div class="c r d" style="left:1066px;width:65px">314.47</div><div class="c r d" style="left:1132px;width:81px">500.00</div><div class="c" style="left:1214px;width:60px">$</div><div class="c d" style="left:1275px;width:73px">07<span class="sl">/</span>11<span class="sl">/</span>2016</div><div class="c d" style="left:1349px;width:71px">2</div></div><div class="row" style="top:653px;color:#ff00ff"><div class="c d" style="left:23px;width:70px">215</div><div class="c" style="left:154px;width:89px">Submitted</div><div class="c d" style="left:244px;width:196px">160816_1146</div><div class="c" style="left:441px;width:143px">A1 Design Services</div><div class="c d" style="left:670px;width:90px">01742 876 234</div><div class="c" style="left:761px;width:84px">James McCaig</div><div class="c d" style="left:1022px;width:43px">1</div><div class="c" style="left:1214px;width:60px">£</div><div class="c d" style="left:1275px;width:73px">16<span class="sl">/</span>08<span class="sl">/</span>2016</div><div class="c d" style="left:1349px;width:71px">3</div></div><div class="row" style="top:670px;color:#ff00ff"><div class="c d" style="left:23px;width:70px">214</div><div class="c" style="left:154px;width:89px">Submitted</div><div class="c d" style="left:244px;width:196px">160714_1217</div><div class="c" style="left:441px;width:143px">ABS Garages Ltd</div><div class="c d" style="left:670px;width:90px">0191 254 5909</div><div class="c" style="left:761px;width:84px">James McCaig</div><div class="c" style="left:846px;width:101px">James McCaig</div><div class="c d" style="left:1022px;width:43px">1</div><div class="c r d" style="left:1066px;width:65px">550.00</div><div class="c r d" style="left:1132px;width:81px">550.00</div><div class="c" style="left:1214px;width:60px">£</div><div class="c d" style="left:1275px;width:73px">14<span class="sl">/</span>07<span class="sl">/</span>2016</div><div class="c d" style="left:1349px;width:71px">2</div></div></div>
</div>
<div class="a" id="hscroll"></div>
<svg class="a" style="left:9px;top:680px" width="8" height="10"><path d="M6 0 L1 5 L6 10 Z" fill="#4a5670"/></svg>
<svg class="a" style="left:1351px;top:680px" width="8" height="10"><path d="M1 0 L6 5 L1 10 Z" fill="#4a5670"/></svg>
<div class="a" id="thumb"></div>
<div class="grip" style="left:420px"></div><div class="grip" style="left:422px"></div><div class="grip" style="left:424px"></div><div class="grip" style="left:426px"></div>

<!-- bottom -->
<svg class="a" style="left:12px;top:706px" width="128" height="56"><path d="M3.5 0.5 H124.5 L127.5 3.5 V52.5 L124.5 55.5 H3.5 L0.5 52.5 V3.5 Z" fill="none" stroke="#8a8d93" stroke-width="1"/></svg>
<div class="legend" style="left:22px;top:698px;width:101px;height:14px"></div>
<div class="cb" style="left:25px;top:699px;width:13px;height:13px"></div>
<div class="a" style="left:42px;top:700px;font-weight:bold;font-size:12px;letter-spacing:-0.35px;word-spacing:2px">Limit Records</div>
<div class="inp" style="left:37px;top:726px;width:66px"><span class="tx" style="top:2px;left:2px;letter-spacing:-0.3px">100</span></div>

<svg class="a" style="left:146px;top:705px" width="148" height="57"><path d="M3.5 0.5 H144.5 L147.5 3.5 V53.5 L144.5 56.5 H3.5 L0.5 53.5 V3.5 Z" fill="none" stroke="#8a8d93" stroke-width="1"/></svg>
<div class="a" style="left:154px;top:713px;font-size:12px;letter-spacing:-0.5px">Records</div>
<div class="num" style="left:204px;top:710px;width:84px">238</div>
<div class="a" style="left:154px;top:739px;font-size:12px;letter-spacing:-0.5px">Value</div>
<div class="num" style="left:204px;top:736px;width:84px;letter-spacing:-0.4px">£393,027.80</div>
<div class="a" style="left:303px;top:740px;font-size:12px;letter-spacing:-0.68px">Value based on Minimum Quoted Quantity.</div>
</body></html>
